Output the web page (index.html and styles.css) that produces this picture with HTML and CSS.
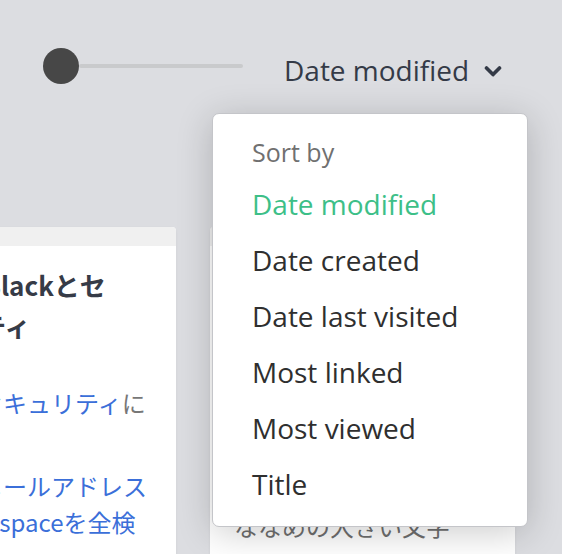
FILE: index.html
```html
<!DOCTYPE html>
<html lang="ja">
<head>
<meta charset="utf-8">
<title>Sort menu</title>
<link rel="stylesheet" href="styles.css">
</head>
<body>
<div class="page">
  <header class="toolbar">
    <div class="slider" aria-label="Card size">
      <span class="knob"></span>
      <span class="track"></span>
    </div>
    <button class="sort" type="button">
      <span class="sort-label">Date modified</span>
      <svg class="chev" width="18" height="13" viewBox="0 0 18 13" aria-hidden="true">
        <polyline points="2.5,3 9,9.6 15.5,3" fill="none" stroke="#343a47" stroke-width="3.6" stroke-linecap="round" stroke-linejoin="round"/>
      </svg>
    </button>
  </header>

  <main class="cards">
    <article class="card">
      <div class="card-head"></div>
      <div class="card-body">
        <h2 class="card-title card-title-shift">第13回Slackとセキュリティ</h2>
        <p class="card-text"><a class="link" href="#">Slackのセキュリティ</a>について</p>
        <p class="card-text card-text-tight"><a class="link" href="#">Slackのメールアドレスからworkspaceを全検索。</a></p>
      </div>
    </article>
    <article class="card">
      <div class="card-head"></div>
      <div class="card-body">
        <h2 class="card-title">文字スタイルの表示確認</h2>
        <p class="card-text">太字と細字と下線の文字の見本です</p>
        <p class="card-text card-text-tight">小さい文字の見本</p>
        <p class="card-text card-text-last">ななめの大きい文字</p>
      </div>
    </article>
  </main>

  <ul class="menu" role="menu">
    <li class="menu-label">Sort by</li>
    <li class="menu-item active" role="menuitem">Date modified</li>
    <li class="menu-item" role="menuitem">Date created</li>
    <li class="menu-item" role="menuitem">Date last visited</li>
    <li class="menu-item" role="menuitem">Most linked</li>
    <li class="menu-item" role="menuitem">Most viewed</li>
    <li class="menu-item" role="menuitem">Title</li>
  </ul>
</div>
</body>
</html>
```
FILE: styles.css
```css
html, body {
  margin: 0;
  padding: 0;
}

body {
  width: 562px;
  height: 554px;
  overflow: hidden;
  background: #dcdde1;
  font-family: "Open Sans", "Noto Sans", sans-serif;
}

.page {
  position: relative;
  height: 554px;
  overflow: hidden;
}

/* toolbar */
.toolbar {
  display: flex;
  align-items: flex-start;
  padding-top: 40px;
  height: 49px;
}

.slider {
  display: flex;
  align-items: center;
  width: 200px;
  height: 36px;
  margin-left: 43px;
  margin-top: 8px;
}

.knob {
  flex: none;
  width: 36px;
  height: 36px;
  border-radius: 50%;
  background: #474747;
}

.track {
  flex: 1;
  height: 4px;
  border-radius: 2px;
  background: #c9cacc;
}

.sort {
  display: flex;
  align-items: center;
  margin: 10px 0 0 41px;
  padding: 0;
  border: 0;
  background: none;
  font-family: "Open Sans", sans-serif;
  font-size: 28px;
  line-height: 40px;
  color: #343a47;
  cursor: pointer;
}

.chev {
  margin-left: 15px;
  margin-top: 2px;
}

/* cards */
.cards {
  display: flex;
  gap: 34px;
  margin-left: -129px;
  margin-top: 138px;
}

.card {
  flex: none;
  width: 305px;
  height: 420px;
  background: #ffffff;
  border-radius: 4px 4px 0 0;
  box-shadow: 0 1px 3px rgba(0, 0, 0, 0.06);
}

.card-head {
  height: 19px;
  background: #f0f0f0;
  border-radius: 4px 4px 0 0;
}

.card-body {
  padding: 18px 24px 0;
  font-family: "Noto Sans CJK JP", sans-serif;
}

.card-title {
  margin: 0;
  padding-right: 40px;
  font-size: 26px;
  line-height: 41px;
  font-weight: 700;
  color: #363b47;
}

.card-title-shift {
  padding-left: 7px;
}

.card-text {
  margin: 39px 0 0;
  font-size: 24px;
  line-height: 36px;
  color: #777777;
}

.card-text-tight {
  margin-top: 11px;
}

.card-text-last {
  margin-top: 4px;
  color: #6f6f6f;
}

.link {
  color: #3b6fd9;
  text-decoration: none;
}

/* dropdown menu */
.menu {
  position: absolute;
  left: 212px;
  top: 113px;
  width: 316px;
  box-sizing: border-box;
  margin: 0;
  padding: 14px 0;
  list-style: none;
  background: #ffffff;
  border: 1px solid #c4c5c9;
  border-radius: 7px;
  box-shadow: 0 6px 36px rgba(0, 0, 0, 0.2);
}

.menu-label {
  padding-left: 39px;
  font-size: 25px;
  line-height: 48px;
  color: #707070;
}

.menu-item {
  padding-left: 39px;
  font-size: 28px;
  line-height: 56px;
  color: #2f2f2f;
}

.menu-item.active {
  color: #3dbf88;
}
```
